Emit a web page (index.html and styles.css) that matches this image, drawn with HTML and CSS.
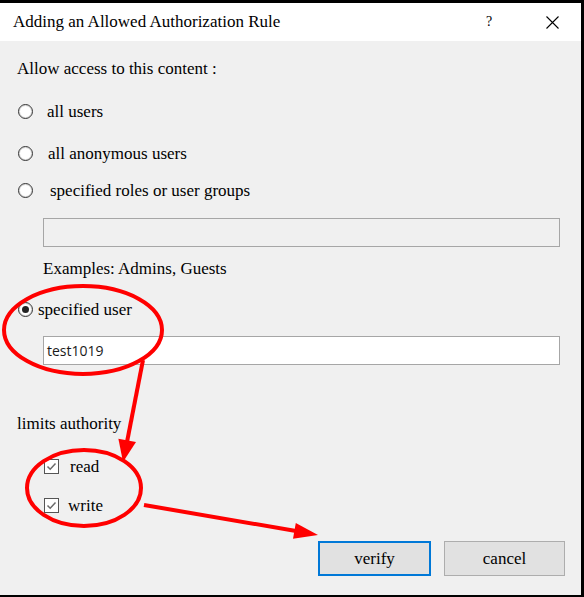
FILE: index.html
```html
<!DOCTYPE html>
<html>
<head>
<meta charset="utf-8">
<link rel="stylesheet" href="styles.css">
</head>
<body>
<div class="win">
  <div class="win-title">
    <div class="win-caption">Adding an Allowed Authorization Rule</div>
    <div class="win-help">?</div>
    <div class="win-close"><svg width="13" height="13" viewBox="0 0 13 13"><path d="M0.5 0.5 L12.5 12.5 M12.5 0.5 L0.5 12.5" stroke="#000" stroke-width="1.1" fill="none"/></svg></div>
  </div>
  <div class="win-body">
    <div class="line line-head">Allow access to this content :</div>
    <div class="line opt opt-1"><span class="dot"></span><span class="ot-1">all users</span></div>
    <div class="line opt opt-2"><span class="dot"></span><span class="ot-2">all anonymous users</span></div>
    <div class="line opt opt-3"><span class="dot"></span><span class="ot-3">specified roles or user groups</span></div>
    <div class="field field-off"></div>
    <div class="line line-ex">Examples: Admins, Guests</div>
    <div class="line opt opt-4"><span class="dot dot-on"></span><span class="ot-4">specified user</span></div>
    <div class="field field-on"><span class="field-val">test1019</span></div>
    <div class="line line-lim">limits authority</div>
    <div class="line tick tick-1"><span class="box"><svg width="13" height="13" viewBox="0 0 13 13"><path d="M2.5 6.5 L5.2 9.2 L10.5 3.5" stroke="#6a6a6a" stroke-width="1.5" fill="none"/></svg></span><span class="tt-1">read</span></div>
    <div class="line tick tick-2"><span class="box"><svg width="13" height="13" viewBox="0 0 13 13"><path d="M2.5 6.5 L5.2 9.2 L10.5 3.5" stroke="#6a6a6a" stroke-width="1.5" fill="none"/></svg></span><span class="tt-2">write</span></div>
    <div class="actions">
      <div class="act act-main">verify</div>
      <div class="act act-cancel">cancel</div>
    </div>
  </div>
</div>
<svg class="marks" width="584" height="597" viewBox="0 0 584 597">
  <ellipse cx="83" cy="330" rx="79" ry="44" fill="none" stroke="#ff0000" stroke-width="4"/>
  <ellipse cx="84" cy="488" rx="57" ry="38" fill="none" stroke="#ff0000" stroke-width="4"/>
  <line x1="143" y1="360" x2="127" y2="442" stroke="#ff0000" stroke-width="4"/>
  <polygon points="123,462 136,442 118.4,438.7" fill="#ff0000"/>
  <line x1="144" y1="505" x2="296" y2="531" stroke="#ff0000" stroke-width="4"/>
  <polygon points="318,535 293,538.8 295.8,523" fill="#ff0000"/>
</svg>
</body>
</html>
```

FILE: styles.css
```css
body {
  margin: 0;
  background: #000;
  position: relative;
  font: 17px "Liberation Serif", serif;
  color: #000;
}
.win {
  margin-top: 3px;
  width: 581px;
  height: 592px;
  background: #f0f0f0;
  overflow: hidden;
}
.win-title {
  height: 38px;
  background: #fff;
  display: grid;
  grid-template-columns: 1fr 60px 35px;
  align-items: center;
}
.win-caption {
  padding-left: 13px;
  font: 17px "Liberation Serif", serif;
}
.win-help {
  font: 14px "Liberation Serif", serif;
}
.win-close {
  height: 13px;
}
.win-close svg { display: block; }
.win-body {
  padding-left: 17px;
}
.line {
  height: 24px;
  line-height: 24px;
  font: 17px/24px "Liberation Serif", serif;
  white-space: nowrap;
}
.line-head { padding-top: 16px; }
.dot {
  display: inline-block;
  vertical-align: -2px;
  width: 13px;
  height: 13px;
  border: 1px solid #333;
  border-radius: 50%;
  background: #fff;
  box-shadow: inset 0 0 0 1px #d8d8d8;
  position: relative;
  margin-left: 1px;
}
.dot-on::after {
  content: "";
  position: absolute;
  left: 3px;
  top: 3px;
  width: 7px;
  height: 7px;
  border-radius: 50%;
  background: #222;
}
.opt-1 { margin-top: 19px; }
.opt-2 { margin-top: 18px; }
.opt-3 { margin-top: 13px; }
.opt-4 { margin-top: 17px; }
.ot-1 { margin-left: 14px; }
.ot-2 { margin-left: 15px; }
.ot-3 { margin-left: 17px; }
.ot-4 { margin-left: 5px; }
.field {
  margin-left: 26px;
  width: 515px;
  height: 27px;
  border: 1px solid #a6a6a6;
}
.field-off {
  margin-top: 15px;
  background: #f0f0f0;
}
.field-on {
  margin-top: 14px;
  background: #fff;
}
.field-val {
  display: block;
  padding-left: 3px;
  font: 14px/27px "Open Sans", "Noto Sans", sans-serif;
  color: #1a1a1a;
}
.line-ex {
  margin-top: 10px;
  margin-left: 26px;
}
.line-lim { margin-top: 47px; }
.tick { margin-left: 27px; }
.tick-1 { margin-top: 19px; }
.tick-2 { margin-top: 15px; }
.box {
  display: inline-block;
  vertical-align: -2px;
  width: 13px;
  height: 13px;
  border: 1px solid #555;
  background: #fff;
}
.box svg { display: block; }
.tt-1 { margin-left: 11px; }
.tt-2 { margin-left: 9px; }
.actions {
  margin-top: 23px;
  margin-left: 301px;
  display: grid;
  grid-template-columns: 113px 121px;
  column-gap: 13px;
}
.act {
  height: 33px;
  border: 1px solid #adadad;
  background: #e1e1e1;
  text-align: center;
  font: 17px/33px "Liberation Serif", serif;
}
.act-main {
  height: 31px;
  line-height: 31px;
  border: 2px solid #0078d7;
}
.marks {
  position: absolute;
  left: 0;
  top: 0;
  pointer-events: none;
}
```
